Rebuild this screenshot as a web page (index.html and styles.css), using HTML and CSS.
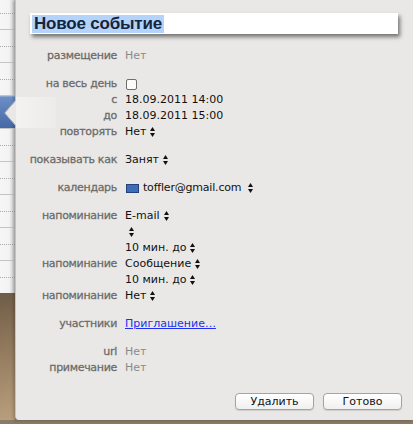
FILE: index.html
```html
<!DOCTYPE html>
<html lang="ru">
<head>
<meta charset="utf-8">
<title>Новое событие</title>
<link rel="stylesheet" href="styles.css">
</head>
<body>
<div class="screen">
  <div class="cal">
    <div class="slots">
      <div class="slot first"></div>
      <div class="slot hour"></div>
      <div class="slot half"></div>
      <div class="slot hour"></div>
      <div class="slot half"></div>
      <div class="slot hour"></div>
      <div class="slot half"></div>
      <div class="slot hour"></div>
      <div class="slot half"></div>
      <div class="slot hour"></div>
      <div class="slot half"></div>
      <div class="slot hour"></div>
      <div class="slot half"></div>
      <div class="slot hour"></div>
      <div class="slot half"></div>
      <div class="slot hour"></div>
      <div class="slot half"></div>
      <div class="slot hour"></div>
      <div class="event"></div>
    </div>
    <div class="desk"></div>
  </div>
  <div class="panel">
    <svg class="pointer" width="12" height="26" viewBox="0 0 12 26"><path d="M12 0.5 L0.8 13 L12 25.5 Z" fill="#eae8e6"/><path d="M11.5 0.5 L0.8 13 L11.5 25.5" fill="none" stroke="#b9b9b9" stroke-width="1"/></svg>
    <div class="ghost"></div>
    <div class="title"><span class="sel">Новое событие</span></div>
    <div class="form">
      <div class="group">
        <div class="lbl">размещение</div><div class="val muted">Нет</div>
      </div>
      <div class="group">
        <div class="lbl">на весь день</div><div class="val"><span class="check"></span></div>
        <div class="lbl">с</div><div class="val">18.09.2011 14:00</div>
        <div class="lbl">до</div><div class="val">18.09.2011 15:00</div>
        <div class="lbl">повторять</div><div class="val">Нет<svg class="step" width="5" height="10" viewBox="0 0 5 10"><path d="M2.5 0L5 4H0z M0 6H5L2.5 10z"/></svg></div>
      </div>
      <div class="group">
        <div class="lbl">показывать как</div><div class="val">Занят<svg class="step" width="5" height="10" viewBox="0 0 5 10"><path d="M2.5 0L5 4H0z M0 6H5L2.5 10z"/></svg></div>
      </div>
      <div class="group">
        <div class="lbl">календарь</div><div class="val"><span class="swatch"></span><span class="tight">toffler@gmail.com</span><svg class="step wide" width="5" height="10" viewBox="0 0 5 10"><path d="M2.5 0L5 4H0z M0 6H5L2.5 10z"/></svg></div>
      </div>
      <div class="group">
        <div class="lbl">напоминание</div><div class="val">E-mail<svg class="step" width="5" height="10" viewBox="0 0 5 10"><path d="M2.5 0L5 4H0z M0 6H5L2.5 10z"/></svg></div>
        <div class="lbl"></div><div class="val"><svg class="step" width="5" height="10" viewBox="0 0 5 10"><path d="M2.5 0L5 4H0z M0 6H5L2.5 10z"/></svg></div>
        <div class="lbl"></div><div class="val">10 мин. до<svg class="step" width="5" height="10" viewBox="0 0 5 10"><path d="M2.5 0L5 4H0z M0 6H5L2.5 10z"/></svg></div>
        <div class="lbl">напоминание</div><div class="val">Сообщение<svg class="step" width="5" height="10" viewBox="0 0 5 10"><path d="M2.5 0L5 4H0z M0 6H5L2.5 10z"/></svg></div>
        <div class="lbl"></div><div class="val">10 мин. до<svg class="step" width="5" height="10" viewBox="0 0 5 10"><path d="M2.5 0L5 4H0z M0 6H5L2.5 10z"/></svg></div>
        <div class="lbl">напоминание</div><div class="val">Нет<svg class="step" width="5" height="10" viewBox="0 0 5 10"><path d="M2.5 0L5 4H0z M0 6H5L2.5 10z"/></svg></div>
      </div>
      <div class="group">
        <div class="lbl">участники</div><div class="val"><a class="link" href="#">Приглашение…</a></div>
      </div>
      <div class="group">
        <div class="lbl">url</div><div class="val muted">Нет</div>
        <div class="lbl">примечание</div><div class="val muted">Нет</div>
      </div>
    </div>
    <div class="buttons">
      <button class="btn">Удалить</button>
      <button class="btn">Готово</button>
    </div>
  </div>
</div>
<div class="floor"></div>
</body>
</html>
```

FILE: styles.css
```css
html, body {
  margin: 0;
  padding: 0;
}
body {
  width: 413px;
  height: 424px;
  overflow: hidden;
  background: #8b7b67;
  font-family: "DejaVu Sans", sans-serif;
}
.screen {
  display: flex;
  height: 420px;
}
.cal {
  width: 15px;
  flex: none;
  display: flex;
  flex-direction: column;
}
.slots {
  position: relative;
  height: 293px;
  overflow: hidden;
  background: linear-gradient(to right, #f6f6f6 0, #f3f3f3 9px, #d9d9d9 13px, #bdbdbd 15px);
}
.slot {
  height: 15px;
  border-bottom: 1px dotted #a9a9a9;
}
.slot.first {
  height: 13px;
}
.slot.hour {
  border-bottom: 1px solid #c4c4c4;
}
.slot.half {
  height: 16px;
}
.event {
  position: absolute;
  left: 0;
  top: 96px;
  width: 15px;
  height: 32px;
  background: linear-gradient(#6d8fc4, #4568a6);
  border-top: 1px solid #8aa6d2;
  box-sizing: border-box;
}
.desk {
  flex: 1;
  background: linear-gradient(170deg, #6f5c47 0%, #8f775c 40%, #b99f7d 100%);
}
.panel {
  position: relative;
  flex: 1;
  background: #eae8e6;
  border-left: 1px solid #c3c3c3;
  border-bottom-left-radius: 4px;
  box-shadow: -2px 1px 3px rgba(0,0,0,0.18);
  box-sizing: border-box;
  padding-top: 13px;
  display: flex;
  flex-direction: column;
}
.pointer {
  position: absolute;
  left: -12px;
  top: 100px;
}
.ghost {
  position: absolute;
  left: 0;
  top: 97px;
  width: 40px;
  height: 31px;
  background: linear-gradient(to right, rgba(255,255,255,0.45), rgba(255,255,255,0.15));
}
.title {
  margin-left: 14px;
  width: 368px;
  height: 21px;
  background: #fff;
  box-shadow: 2px 3px 4px rgba(0,0,0,0.5);
  padding: 1px 2px;
  box-sizing: border-box;
  display: flex;
  align-items: center;
}
.sel {
  background: #b4d3fb;
  color: #13243c;
  font-family: "Liberation Sans", Arial, sans-serif;
  font-weight: bold;
  font-size: 17px;
  line-height: 18px;
  padding: 0 2px;
  letter-spacing: -0.2px;
}
.form {
  margin-top: 14px;
  display: flex;
  flex-direction: column;
  gap: 12px;
}
.group {
  display: grid;
  grid-template-columns: 101px auto;
  column-gap: 8px;
  font-size: 11px;
  line-height: 16px;
}
.lbl {
  text-align: right;
  color: #6c6c6c;
  -webkit-text-stroke: 0.3px #6c6c6c;
  letter-spacing: -0.3px;
  white-space: nowrap;
  min-height: 16px;
}
.val {
  color: #111;
  white-space: nowrap;
  display: flex;
  align-items: center;
  min-height: 16px;
}
.val.muted {
  color: #8a8a8a;
}
.tight {
  letter-spacing: -0.2px;
}
.step {
  margin-left: 4px;
  fill: #111;
}
.step.wide {
  margin-left: 7px;
}
.check {
  width: 9px;
  height: 9px;
  border: 1px solid #6f6f6f;
  border-radius: 2px;
  background: #fbfbfb;
  margin-left: 1px;
}
.swatch {
  width: 11px;
  height: 7px;
  border: 1px solid #24427a;
  background: #3d6db8;
  margin: 0 4px 0 1px;
}
.link {
  color: #1d2ff0;
  text-decoration: underline;
}
.buttons {
  margin-top: 17px;
  display: flex;
  justify-content: flex-end;
  gap: 9px;
  padding-right: 11px;
}
.btn {
  width: 79px;
  height: 17px;
  padding: 0;
  border: 1px solid #a3a3a3;
  border-radius: 4px;
  background: linear-gradient(#ffffff, #f0f0f0);
  box-shadow: 0 1px 1px rgba(0,0,0,0.12);
  font-family: "DejaVu Sans", sans-serif;
  font-size: 11px;
  color: #111;
}
.floor {
  height: 4px;
  background: #8a7a66;
}
```
